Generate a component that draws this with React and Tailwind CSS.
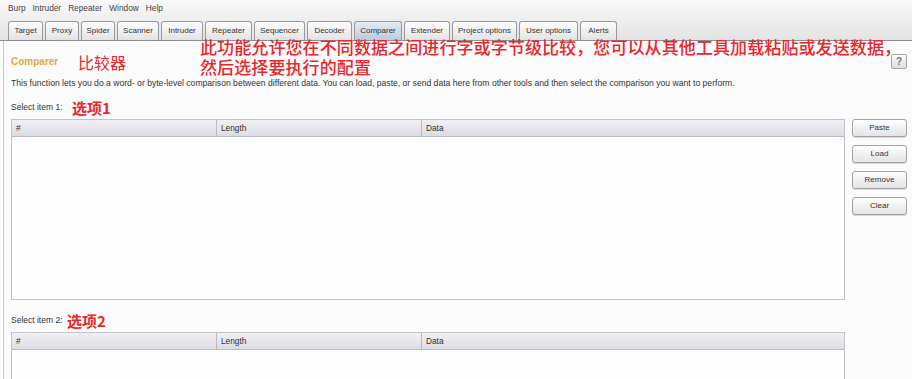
import React from "react";

const tabs = [
  { label: "Target", w: "w-[35px]" },
  { label: "Proxy", w: "w-[34px]" },
  { label: "Spider", w: "w-[34px]" },
  { label: "Scanner", w: "w-[42px]" },
  { label: "Intruder", w: "w-[42px]" },
  { label: "Repeater", w: "w-[47px]" },
  { label: "Sequencer", w: "w-[51px]" },
  { label: "Decoder", w: "w-[45px]" },
  { label: "Comparer", w: "w-[48px]", active: true },
  { label: "Extender", w: "w-[46px]" },
  { label: "Project options", w: "w-[65px]" },
  { label: "User options", w: "w-[59px]" },
  { label: "Alerts", w: "w-[37px]" },
];

function Table({ bodyH }) {
  return (
    <div className="flex-1 flex flex-col border border-[#c4c4c8] bg-[#fdfdfd]">
      <div className="flex h-[17px] bg-gradient-to-b from-[#f0f0f4] to-[#dcdce3] border-b border-[#b9b9c1] text-[8.3px] text-[#333]">
        <div className="w-[205px] flex items-center pl-[4px] border-r border-[#b9b9c1]">#</div>
        <div className="w-[205px] flex items-center pl-[4px] border-r border-[#b9b9c1]">Length</div>
        <div className="flex-1 flex items-center pl-[4px]">Data</div>
      </div>
      <div className={bodyH} />
    </div>
  );
}

function Btn({ children }) {
  return (
    <div className="h-[18px] w-[55px] flex items-center justify-center rounded-[3px] border border-[#a2a2a6] bg-gradient-to-b from-[#fefefe] to-[#e4e4e8] text-[8px] text-[#333] shadow-[0_1px_0_#d8d8d8]">
      {children}
    </div>
  );
}

export default function App() {
  return (
    <div
      className="w-[912px] h-[379px] overflow-hidden flex flex-col bg-[#fbfbfb] relative"
      style={{ fontFamily: '"Liberation Sans", Arial, "Noto Sans CJK SC", sans-serif' }}
    >
      <div className="bg-gradient-to-b from-[#f9f9f9] to-[#e3e3e3] border-b border-[#8e8e8e]">
        <div className="h-[17px] flex items-center gap-[7px] pl-[8px] text-[8.3px] text-[#444]">
          <span>Burp</span>
          <span>Intruder</span>
          <span>Repeater</span>
          <span>Window</span>
          <span>Help</span>
        </div>
        <div className="h-[23px] flex items-end gap-[2px] pl-[8px]">
          {tabs.map((t) => (
            <div
              key={t.label}
              className={
                t.w +
                " h-[19px] flex items-center justify-center rounded-t-[3px] border border-b-0 border-[#9a9a9e] text-[8px] text-[#333] whitespace-nowrap " +
                (t.active
                  ? "bg-gradient-to-b from-[#e3ecf4] to-[#bccbda]"
                  : "bg-gradient-to-b from-[#fdfdfd] to-[#e2e2e4]")
              }
            >
              {t.label}
            </div>
          ))}
        </div>
      </div>

      <div className="flex-1 ml-[3px] border-l border-[#c8c8c8] pl-[7px] pr-[5px] flex flex-col">
        <div className="mt-[13px] h-[15px] flex items-center">
          <span className="text-[10px] font-bold text-[#e5a647] w-[67px]">Comparer</span>
          <span className="text-[16px] leading-none text-[#e8262b]" style={{ fontFamily: '"Noto Sans CJK SC", sans-serif' }}>比较器</span>
          <div className="ml-auto w-[16px] h-[15px] flex items-center justify-center rounded-[2px] border border-[#a6a6a6] bg-gradient-to-b from-[#fafafa] to-[#dedede] text-[10px] font-bold text-[#777]">
            ?
          </div>
        </div>
        <div className="mt-[9px] h-[10px] flex items-center text-[8.6px] text-[#333] whitespace-nowrap">
          This function lets you do a word- or byte-level comparison between different data. You can load, paste, or send data here from other tools and then select the comparison you want to perform.
        </div>

        <div className="mt-[11px] h-[16px] flex items-center">
          <span className="text-[8.5px] text-[#333] w-[61px]">Select item 1:</span>
          <span className="text-[15px] leading-none font-bold text-[#e8262b]" style={{ fontFamily: '"Noto Sans CJK SC", sans-serif' }}>选项1</span>
        </div>
        <div className="mt-[4px] flex gap-[7px]">
          <Table bodyH="h-[162px]" />
          <div className="w-[55px] flex flex-col gap-[8px]">
            <Btn>Paste</Btn>
            <Btn>Load</Btn>
            <Btn>Remove</Btn>
            <Btn>Clear</Btn>
          </div>
        </div>

        <div className="mt-[12px] h-[16px] flex items-center">
          <span className="text-[8.5px] text-[#333] w-[56px]">Select item 2:</span>
          <span className="text-[15px] leading-none font-bold text-[#e8262b]" style={{ fontFamily: '"Noto Sans CJK SC", sans-serif' }}>选项2</span>
        </div>
        <div className="mt-[4px] flex gap-[7px]">
          <Table bodyH="h-[162px]" />
          <div className="w-[55px]" />
        </div>
      </div>

      <div
        className="absolute left-[200px] top-[37px] text-[17px] leading-[20px] text-[#e8262b] font-medium tracking-[0.1px] whitespace-nowrap"
        style={{ fontFamily: '"Noto Sans CJK SC", sans-serif' }}
      >
        <div>此功能允许您在不同数据之间进行字或字节级比较，您可以从其他工具加载粘贴或发送数据，</div>
        <div>然后选择要执行的配置</div>
      </div>
    </div>
  );
}
